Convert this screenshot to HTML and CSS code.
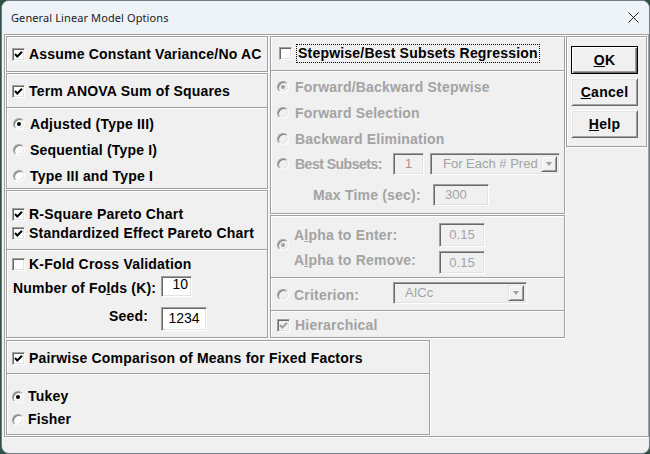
FILE: index.html
```html
<!DOCTYPE html>
<html lang="en">
<head>
    <meta charset="UTF-8">
    <title>General Linear Model Options</title>
    <link rel="stylesheet" href="styles.css">
</head>
<body>

<div class="window">
    <div class="titlebar">
        <span class="title">General Linear Model Options</span>
        <svg class="close" width="11" height="11" viewBox="0 0 11 11"><path d="M0.5 0.5L10.5 10.5M10.5 0.5L0.5 10.5" stroke="#1b1b1b" stroke-width="1"/></svg>
    </div>

    <div class="client">
        <div class="frame">
            <div class="top">

                <!-- left column -->
                <div class="col col-left">
                    <div class="panel p-variance">
                        <div class="sec s-variance">
                            <div class="row"><span class="chk"><svg width="11" height="11" viewBox="0 0 11 11"><path d="M2 5L4.3 7.5L9 2.8" fill="none" stroke="#000" stroke-width="2"/></svg></span>Assume Constant Variance/No AC</div>
                        </div>
                    </div>

                    <div class="panel p-anova">
                        <div class="sec s-anova-head">
                            <div class="row"><span class="chk"><svg width="11" height="11" viewBox="0 0 11 11"><path d="M2 5L4.3 7.5L9 2.8" fill="none" stroke="#000" stroke-width="2"/></svg></span>Term ANOVA Sum of Squares</div>
                        </div>
                        <div class="sec s-anova-type">
                            <div class="row r26"><span class="radio on"></span>Adjusted (Type III)</div>
                            <div class="row r26"><span class="radio"></span>Sequential (Type I)</div>
                            <div class="row r26"><span class="radio"></span>Type III and Type I</div>
                        </div>
                    </div>

                    <div class="panel p-plots">
                        <div class="sec s-pareto">
                            <div class="row r19"><span class="chk"><svg width="11" height="11" viewBox="0 0 11 11"><path d="M2 5L4.3 7.5L9 2.8" fill="none" stroke="#000" stroke-width="2"/></svg></span>R-Square Pareto Chart</div>
                            <div class="row r19"><span class="chk"><svg width="11" height="11" viewBox="0 0 11 11"><path d="M2 5L4.3 7.5L9 2.8" fill="none" stroke="#000" stroke-width="2"/></svg></span>Standardized Effect Pareto Chart</div>
                        </div>
                        <div class="sec s-kfold">
                            <div class="row r19"><span class="chk"></span>K-Fold Cross Validation</div>
                            <div class="row r-folds">
                                <span class="lbl lbl-folds">Number of Fo<u>l</u>ds (K):</span>
                                <span class="edit e-folds">10</span>
                            </div>
                            <div class="row r-seed">
                                <span class="lbl lbl-seed">Seed:</span>
                                <span class="edit e-seed">1234</span>
                            </div>
                        </div>
                    </div>
                </div>

                <!-- middle column -->
                <div class="col col-mid">
                    <div class="panel p-stepwise">
                        <div class="sec s-stepwise-head">
                            <div class="row"><span class="chk"></span><span class="focus">Stepwise/Best Subsets Regression</span></div>
                        </div>
                        <div class="sec s-stepwise dim">
                            <div class="row r26"><span class="radio on"></span>Forward/Backward Stepwise</div>
                            <div class="row r26"><span class="radio"></span>Forward Selection</div>
                            <div class="row r26"><span class="radio"></span>Backward Elimination</div>
                            <div class="row r-best">
                                <span class="radio"></span>
                                <span class="lbl lbl-best">Best Subsets:</span>
                                <span class="edit e-best">1</span>
                                <span class="combo c-best">
                                    <span class="combo-text">For Each # Pred</span>
                                    <span class="combo-btn"><span class="arrow"></span></span>
                                </span>
                            </div>
                            <div class="row r-maxtime">
                                <span class="lbl lbl-maxtime">Max Time (sec):</span>
                                <span class="edit e-maxtime">300</span>
                            </div>
                        </div>
                    </div>

                    <div class="panel p-alpha dim">
                        <div class="sec s-alpha">
                            <span class="radio on"></span>
                            <div class="alpha-fields">
                                <div class="row r-alpha">
                                    <span class="lbl lbl-alpha">A<u>l</u>pha to Enter:</span>
                                    <span class="edit e-alpha">0.15</span>
                                </div>
                                <div class="row r-alpha">
                                    <span class="lbl lbl-alpha lbl-remove">A<u>l</u>pha to Remove:</span>
                                    <span class="edit e-alpha e-remove">0.15</span>
                                </div>
                            </div>
                        </div>
                        <div class="sec s-criterion">
                            <div class="row">
                                <span class="radio"></span>
                                <span class="lbl lbl-criterion">Criterion:</span>
                                <span class="combo c-criterion">
                                    <span class="combo-text">AICc</span>
                                    <span class="combo-btn"><span class="arrow"></span></span>
                                </span>
                            </div>
                        </div>
                        <div class="sec s-hier">
                            <div class="row r19"><span class="chk"><svg width="11" height="11" viewBox="0 0 11 11"><path d="M2 5L4.3 7.5L9 2.8" fill="none" stroke="#a0a0a0" stroke-width="2"/></svg></span>Hierarchical</div>
                        </div>
                    </div>
                </div>

                <!-- buttons -->
                <div class="panel p-buttons">
                    <button class="btn default"><u>O</u>K</button>
                    <button class="btn"><u>C</u>ancel</button>
                    <button class="btn"><u>H</u>elp</button>
                </div>
            </div>

            <div class="panel p-pairwise">
                <div class="sec s-pairwise-head">
                    <div class="row"><span class="chk"><svg width="11" height="11" viewBox="0 0 11 11"><path d="M2 5L4.3 7.5L9 2.8" fill="none" stroke="#000" stroke-width="2"/></svg></span>Pairwise Comparison of Means for Fixed Factors</div>
                </div>
                <div class="sec s-pairwise">
                    <div class="row r23"><span class="radio on"></span>Tukey</div>
                    <div class="row r23"><span class="radio"></span>Fisher</div>
                </div>
            </div>
        </div>
    </div>
</div>

</body>
</html>
```

FILE: styles.css
```css
* {
    box-sizing: border-box;
}
body {
    margin: 0;
    background: #2b5243;
    font: bold 14px "Liberation Sans", Arial, sans-serif;
    color: #000;
}
.window {
    margin-left: 1px;
    width: 649px;
    height: 454px;
    border: 1px solid #6f7c86;
    border-radius: 8px;
    background: #f0f0f0;
    overflow: hidden;
}
.titlebar {
    height: 32px;
    display: flex;
    align-items: center;
    padding-left: 9px;
    background: #eef3f8;
}
.title {
    font: normal 11px "Noto Sans", "Open Sans", sans-serif;
    letter-spacing: 0.1px;
    color: #1a1a1a;
}
.close {
    margin-left: auto;
    margin-right: 10px;
}
.client {
    padding: 1px 0 0 2px;
}

/* etched group boxes */
.frame,
.panel {
    border: 1px solid #a0a0a0;
    box-shadow: inset 1px 1px 0 #fff, 1px 1px 0 #fff;
}
.frame {
    width: 645px;
    height: 403px;
    padding: 1px 0 0 1px;
}
.top {
    display: flex;
    align-items: flex-start;
}
.col {
    display: flex;
    flex-direction: column;
    gap: 1px;
}
.col-left {
    width: 262px;
}
.col-mid {
    width: 295px;
    margin-left: 2px;
}
.panel {
    display: flex;
    flex-direction: column;
}
.sec + .sec {
    border-top: 1px solid #a0a0a0;
    box-shadow: inset 0 1px 0 #fff;
}
.row {
    display: flex;
    align-items: center;
    line-height: 17px;
    letter-spacing: 0.2px;
    white-space: nowrap;
}
.r19 { height: 19px; }
.r23 { height: 23px; }
.r26 { height: 26px; }

.dim {
    color: #a3a3a3;
}

/* check boxes and radio buttons */
.chk {
    flex: none;
    width: 13px;
    height: 13px;
    margin-right: 4px;
    border: 1px solid;
    border-color: #a0a0a0 #fff #fff #a0a0a0;
    box-shadow: inset 1px 1px 0 #696969, inset -1px -1px 0 #e3e3e3;
    background: #fff;
    display: flex;
    align-items: center;
    justify-content: center;
}
.dim .chk {
    background: #f0f0f0;
}
.radio {
    flex: none;
    position: relative;
    width: 12px;
    height: 12px;
    margin-right: 5px;
    border-radius: 50%;
    border: 1px solid;
    border-color: #a0a0a0 #fff #fff #a0a0a0;
    box-shadow: inset 1px 1px 0 #808080, inset -1px -1px 0 #e3e3e3;
    background: #fff;
}
.dim .radio {
    background: #f0f0f0;
}
.radio.on::after {
    content: "";
    position: absolute;
    left: 3px;
    top: 3px;
    width: 4px;
    height: 4px;
    border-radius: 50%;
    background: #000;
}
.dim .radio.on::after {
    background: #a0a0a0;
}

/* edit fields and combo boxes */
.edit {
    flex: none;
    display: block;
    border: 1px solid;
    border-color: #a0a0a0 #fff #fff #a0a0a0;
    box-shadow: inset 1px 1px 0 #696969, inset -1px -1px 0 #e3e3e3;
    background: #fff;
    font-weight: normal;
    font-size: 13px;
    text-align: center;
    letter-spacing: 0;
}
.dim .edit {
    background: #f0f0f0;
}
.combo {
    flex: none;
    display: flex;
    height: 22px;
    padding: 2px;
    border: 1px solid;
    border-color: #a0a0a0 #fff #fff #a0a0a0;
    box-shadow: inset 1px 1px 0 #696969, inset -1px -1px 0 #e3e3e3;
    background: #f0f0f0;
    font-weight: normal;
    font-size: 13px;
    letter-spacing: 0;
}
.combo-text {
    flex: 1;
    line-height: 16px;
}
.combo-btn {
    width: 16px;
    height: 16px;
    border: 1px solid;
    border-color: #e3e3e3 #696969 #696969 #e3e3e3;
    box-shadow: inset 1px 1px 0 #fff, inset -1px -1px 0 #a0a0a0;
    display: flex;
    align-items: center;
    justify-content: center;
}
.arrow {
    width: 0;
    height: 0;
    border-left: 3.5px solid transparent;
    border-right: 3.5px solid transparent;
    border-top: 4px solid #a0a0a0;
}

/* left column */
.p-variance { height: 36px; }
.s-variance {
    height: 34px;
    padding-left: 5px;
    display: flex;
}
.p-anova { height: 116px; }
.s-anova-head {
    height: 33px;
    padding: 1px 0 0 5px;
    display: flex;
}
.s-anova-type {
    height: 81px;
    padding: 3px 0 0 6px;
}
.p-plots { height: 148px; }
.s-pareto {
    height: 58px;
    padding: 14px 0 0 5px;
}
.s-kfold {
    height: 88px;
    padding: 5px 0 0 5px;
}
.lbl {
    flex: none;
}
.lbl-folds {
    width: 148px;
    margin-left: 1px;
    padding-top: 4px;
}
.r-folds {
    margin-top: 2px;
    height: 21px;
}
.e-folds {
    width: 31px;
    height: 21px;
    line-height: 14px;
    text-align: right;
    padding-right: 3px;
    font-size: 14px;
}
.r-seed {
    margin-top: 10px;
    height: 24px;
}
.lbl-seed {
    width: 149px;
    text-align: right;
    padding: 0 13px 5px 0;
}
.e-seed {
    width: 46px;
    height: 24px;
    line-height: 20px;
    font-size: 14px;
}

/* middle column */
.p-stepwise { height: 178px; }
.s-stepwise-head {
    height: 33px;
    padding-left: 8px;
    display: flex;
}
.focus {
    border: 1px dotted #000;
    padding: 0 1px;
    line-height: 17px;
}
.s-stepwise {
    height: 143px;
    padding: 3px 0 0 6px;
}
.s-stepwise .radio,
.p-alpha .radio {
    margin-right: 6px;
}
.r-best {
    height: 24px;
}
.lbl-best {
    width: 98px;
    letter-spacing: -0.5px;
}
.e-best {
    width: 31px;
    height: 22px;
    line-height: 20px;
    color: #b09090;
}
.c-best {
    width: 130px;
    margin-left: 6px;
}
.c-best .combo-text {
    padding-left: 10px;
}
.r-maxtime {
    margin-top: 8px;
    height: 22px;
}
.lbl-maxtime {
    width: 120px;
    margin-left: 36px;
}
.e-maxtime {
    width: 56px;
    height: 22px;
    line-height: 20px;
    text-align: left;
    padding-left: 11px;
}

.p-alpha { height: 123px; }
.s-alpha {
    height: 61px;
    padding: 7px 0 0 6px;
    display: flex;
    align-items: flex-start;
}
.s-alpha .radio {
    margin: 16px 5px 0 0;
}
.alpha-fields {
    display: flex;
    flex-direction: column;
    gap: 4px;
}
.lbl-alpha {
    width: 145px;
}
.lbl-remove {
    padding-bottom: 4px;
}
.e-alpha {
    width: 46px;
    height: 24px;
    line-height: 22px;
}
.e-remove {
    height: 23px;
}
.s-criterion {
    height: 33px;
    padding: 4px 0 0 6px;
}
.s-criterion .row {
    height: 22px;
}
.s-criterion .radio {
    margin-top: 4px;
    margin-right: 5px;
}
.lbl-criterion {
    width: 99px;
    padding-top: 4px;
}
.c-criterion {
    width: 134px;
}
.c-criterion .combo-text {
    padding-left: 9px;
}
.s-hier {
    height: 27px;
    padding: 5px 0 0 6px;
}
.s-hier .chk {
    margin-right: 5px;
}

/* buttons */
.p-buttons {
    width: 81px;
    height: 111px;
    margin-left: 1px;
    padding: 9px 0 0 4px;
    gap: 4px;
}
.btn {
    width: 67px;
    height: 28px;
    padding: 0;
    border: 1px solid;
    border-color: #fff #696969 #696969 #fff;
    box-shadow: inset 1px 1px 0 #e3e3e3, inset -1px -1px 0 #a0a0a0;
    background: #f0f0f0;
    font: bold 14px "Liberation Sans", Arial, sans-serif;
    letter-spacing: 0.3px;
    color: #000;
}
.btn.default {
    border: 1px solid #000;
    box-shadow: inset 1px 1px 0 #fff, inset -1px -1px 0 #696969, inset -2px -2px 0 #a0a0a0;
}

/* pairwise comparisons */
.p-pairwise {
    width: 424px;
    height: 95px;
    margin-top: 2px;
}
.s-pairwise-head {
    height: 32px;
    padding: 2px 0 0 5px;
    display: flex;
}
.s-pairwise {
    height: 61px;
    padding: 11px 0 0 5px;
}
.s-pairwise .radio {
    margin-right: 4px;
}
```
